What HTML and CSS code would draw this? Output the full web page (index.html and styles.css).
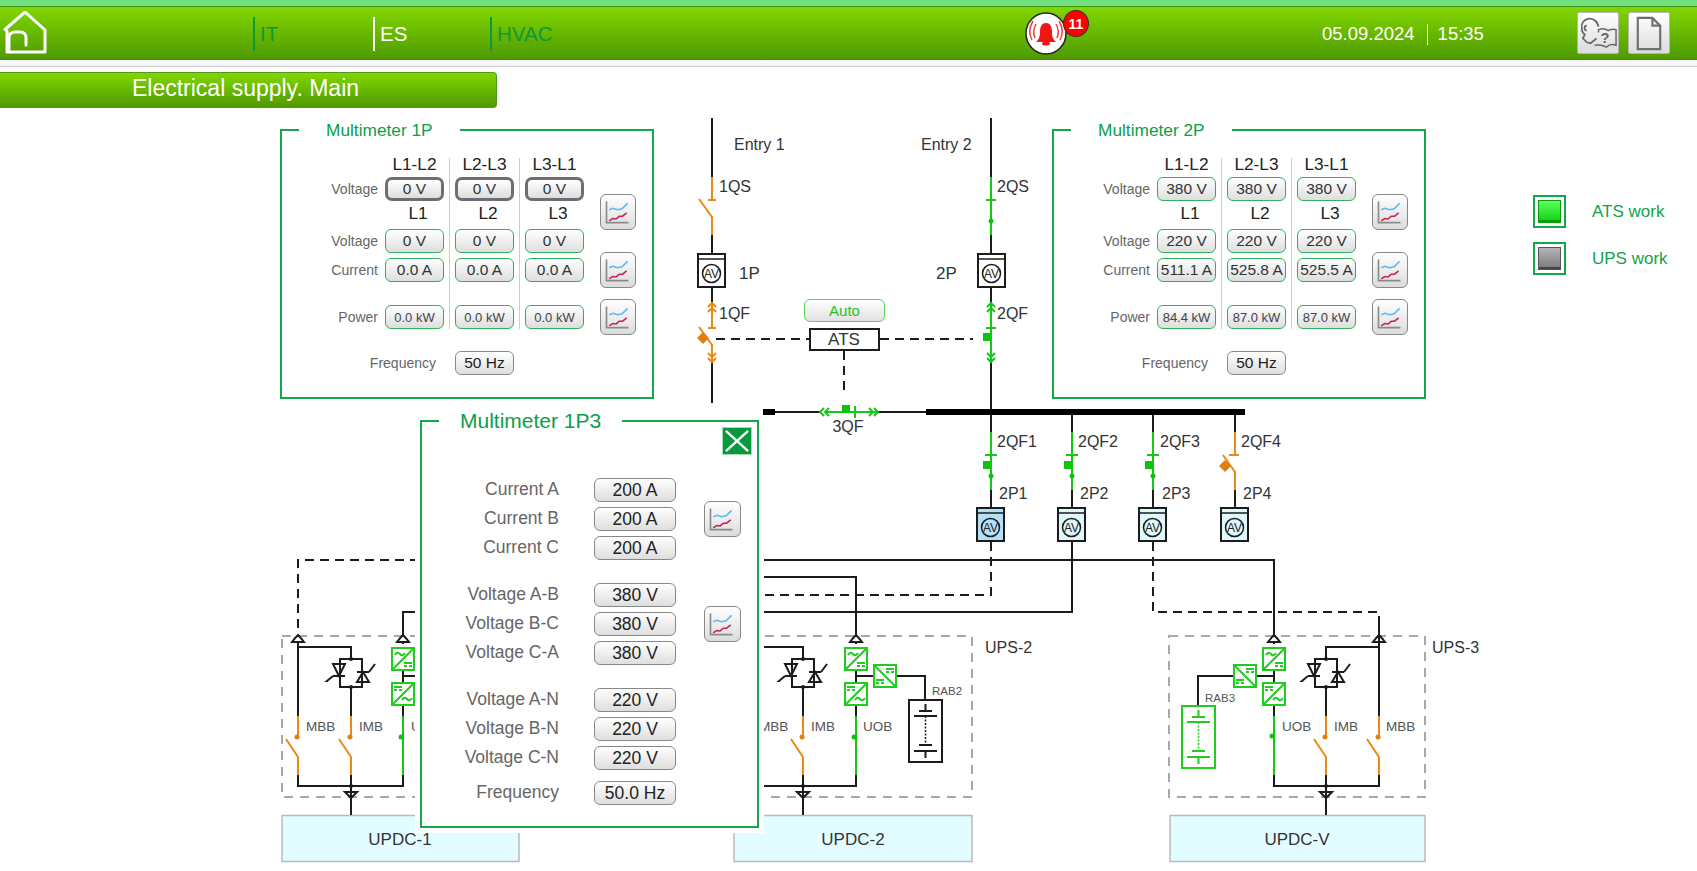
FILE: index.html
```html
<!DOCTYPE html>
<html lang="en">
<head>
<meta charset="utf-8">
<title>Electrical supply. Main</title>
<link rel="stylesheet" href="styles.css">
</head>
<body>
<div class="page">
  <div class="topstrip"></div>
  <header class="header">
    <svg class="home" viewBox="0 0 48 48"><path d="M3 18.500L23 1 43 19V41H5V20M7 38V27Q7 21 13 21H18Q24 21 24 27V34"/></svg>
    <nav class="nav">
      <a class="nav-item muted wide">IT</a>
      <a class="nav-item light">ES</a>
      <a class="nav-item muted wide">HVAC</a>
    </nav>
    <div class="alarm">
      <svg class="bell" viewBox="0 0 42 43">
        <ellipse cx="21" cy="21.500" rx="20" ry="20.500" fill="#fff" stroke="#222" stroke-width="1.500"/>
        <path d="M21 11C16.500 11 15 15 15 20C15 25 14 27 11 30H31C28 27 27 25 27 20C27 15 25.500 11 21 11Z" fill="#f01616"/>
        <ellipse cx="21" cy="31.500" rx="4" ry="2" fill="#f01616"/>
        <path d="M11 12Q7 19 10 26M8 9Q2 19 7 28M31 12Q35 19 32 26M34 9Q40 19 35 28" fill="none" stroke="#f04040" stroke-width="1.500"/>
      </svg>
      <span class="badge">11</span>
    </div>
    <div class="clock"><span>05.09.2024</span><i class="clock-sep"></i><span>15:35</span></div>
    <div class="tools">
      <button class="tool">
        <svg viewBox="0 0 41 41">
          <path d="M21 14C20 8 15 5 10 6C5 7 3 12 4 16C4 19 5 21 7 22L5 26L9 30L13 31L19 26M9 13C6 13 6 18 9 18" fill="none" stroke="#666" stroke-width="1.800"/>
          <path d="M21 20V17Q27 15 31 18Q35 16 39 17V33Q33 31 29 35Q24 32 17 33" fill="none" stroke="#666" stroke-width="1.500"/>
          <text x="23" y="31" class="tool-q">?</text>
        </svg>
      </button>
      <button class="tool">
        <svg viewBox="0 0 41 41"><path d="M9 5H24L32 13V37H9ZM24 5V13H32" fill="none" stroke="#6f6f6f" stroke-width="2.200"/></svg>
      </button>
    </div>
  </header>
  <div class="subbar"></div>
  <h1 class="titlebar">Electrical supply. Main</h1>

  <div class="stage">
    <svg class="scheme" viewBox="0 0 1697 871">
      <defs>
        <g id="chev-up"><path d="M-4 4L0 0 4 4M-4 9L0 5 4 9"/></g>
        <g id="chev-dn"><path d="M-4 -4L0 0 4 -4M-4 -9L0 -5 4 -9"/></g>
        <g id="chev-l"><path d="M4 -4L0 0 4 4M9 -4L5 0 9 4"/></g>
        <g id="chev-r"><path d="M-4 -4L0 0 -4 4M-9 -4L-5 0 -9 4"/></g>
        <g id="meter">
          <rect x="1" y="1" width="27" height="33" class="m-body"/>
          <path d="M1 6H28" class="m-line"/>
          <circle cx="14.500" cy="20.500" r="9" fill="none" class="m-line"/>
          <text x="14.500" y="21" class="m-text">AV</text>
        </g>
        <g id="conv-a">
          <rect x="1" y="1" width="22" height="22"/>
          <path d="M1 23L23 1M4 8Q6.500 4 9 7T14 6"/>
          <path d="M13 16H21M13 19H16M18 19H21" class="thin"/>
        </g>
        <g id="conv-b">
          <rect x="1" y="1" width="22" height="22"/>
          <path d="M1 23L23 1M11 18Q13.500 14 16 17T21 16"/>
          <path d="M3 5H11M3 8H6M8 8H11" class="thin"/>
        </g>
        <g id="conv-c">
          <rect x="1" y="1" width="22" height="22"/>
          <path d="M1 1L23 23"/>
          <path d="M13 5H21M13 8H16M18 8H21M3 16H11M3 19H6M8 19H11" class="thin"/>
        </g>
        <g id="thy">
          <rect x="1" y="1" width="22" height="28"/>
          <path d="M-6 6H6L0 18ZM-6 18H6M-6 18L-12 23H-11"/>
          <path d="M18 24H30L24 14ZM18 14H30M30 14L36 6"/>
          <circle cx="12" cy="1" r="2" class="dot"/>
          <circle cx="12" cy="29" r="2" class="dot"/>
        </g>
        <g id="up"><path d="M-6 7Q-3 3 0 0Q3 3 6 7ZM0 7V9"/></g>
        <g id="dn"><path d="M-6 0H6L0 6Z"/><circle cx="0" cy="-6" r="2" class="dot"/></g>
        <g id="sw"><path d="M0 0V21M-12 23L0 41V59"/><circle cx="-1" cy="21" r="2.500" class="orange-fill"/></g>
        <g id="batt">
          <rect x="1" y="1" width="33" height="62"/>
          <path d="M17.500 5V12M11 12H24M6 17H29M11 46H24M6 52H29M17.500 52V59"/>
          <path d="M17.500 17V46" class="dots"/>
        </g>
        <g id="chart-ico">
          <path d="M6 6V29H30" fill="none" stroke="#8a8a8a" stroke-width="1.800"/>
          <path d="M9 15L13 13.500 18 15 23 14 29 8" fill="none" stroke="#5bb8ef" stroke-width="1.700"/>
          <path d="M9 27L13 24.500 16.500 25 20 22 23.500 22 28 18.500" fill="none" stroke="#c8205a" stroke-width="1.700"/>
        </g>
      </defs>

      <!-- UPS frames and PDU blocks -->
      <rect class="ups-frame" x="282" y="636" width="237" height="161"/>
      <rect class="ups-frame" x="733" y="636" width="239" height="161"/>
      <rect class="ups-frame" x="1169" y="636" width="256" height="161"/>
      <rect class="updc" x="282" y="815.500" width="237" height="46"/>
      <rect class="updc" x="734" y="815.500" width="238" height="46"/>
      <rect class="updc" x="1170" y="815.500" width="255" height="46"/>
      <text class="t17 c" x="400" y="839">UPDC-1</text>
      <text class="t17 c" x="853" y="839">UPDC-2</text>
      <text class="t17 c" x="1297" y="839">UPDC-V</text>
      <text class="t16" x="985" y="647">UPS-2</text>
      <text class="t16" x="1432" y="647">UPS-3</text>

      <!-- Entry 1 -->
      <path class="bk" d="M712 118V177M712 235V253M712 287V303M712 362V403"/>
      <path class="or" d="M712 177V200M708 200H716M699 199L712 217V235M712 304V328M708 328H716M699 327L712 345V362"/>
      <use href="#chev-up" x="712" y="303" class="or"/>
      <use href="#chev-dn" x="712" y="362" class="or"/>
      <path d="M703 332L709 338 703 344 697 338Z" class="or-fill"/>
      <use href="#meter" x="697" y="253" class="m-white"/>
      <!-- Entry 2 -->
      <path class="bk" d="M991 118V177M991 235V253M991 287V303M991 362V506"/>
      <path class="gr" d="M991 177V235M986 200H996M991 304V362M986 328H996"/>
      <circle cx="991" cy="221" r="2.500" class="gr-fill"/>
      <use href="#chev-up" x="991" y="303" class="gr"/>
      <use href="#chev-dn" x="991" y="362" class="gr"/>
      <rect x="983" y="333" width="8" height="8" class="gr-fill"/>
      <use href="#meter" x="977" y="253" class="m-white"/>
      <text class="t16" x="734" y="144">Entry 1</text>
      <text class="t16" x="921" y="144">Entry 2</text>
      <text class="t16" x="719" y="186">1QS</text>
      <text class="t16" x="997" y="186">2QS</text>
      <text class="t17" x="739" y="273">1P</text>
      <text class="t17" x="936" y="273">2P</text>
      <text class="t16" x="719" y="313">1QF</text>
      <text class="t16" x="997" y="313">2QF</text>

      <!-- ATS links -->
      <path class="bk ds" d="M716 339H809M880 339H973M844 351V395"/>
      <rect class="ats" x="810" y="329" width="69" height="21"/>
      <text class="t17 c" x="844" y="339">ATS</text>

      <!-- Bus -->
      <path class="bk" d="M775 412H820M878 412H926"/>
      <path class="bus" d="M763 412H775M926 412H1245"/>
      <path class="gr" d="M826 412H877M855 406V418"/>
      <use href="#chev-l" x="820" y="412" class="gr"/>
      <use href="#chev-r" x="878" y="412" class="gr"/>
      <rect x="842" y="405" width="8" height="8" class="gr-fill"/>
      <text class="t16 c" x="848" y="426">3QF</text>

      <!-- Outgoing feeders -->
      <path class="bk" d="M991 415V432M991 490V507M1072 415V432M1072 490V507M1153 415V432M1153 490V507M1235 415V432M1235 490V507"/>
      <path class="gr" d="M991 432V490M985 455H997M1072 432V490M1066 455H1078M1153 432V490M1147 455H1159"/>
      <rect x="983" y="461" width="8" height="8" class="gr-fill"/>
      <rect x="1064" y="461" width="8" height="8" class="gr-fill"/>
      <rect x="1145" y="461" width="8" height="8" class="gr-fill"/>
      <circle cx="991" cy="476" r="2.500" class="gr-fill"/>
      <circle cx="1072" cy="476" r="2.500" class="gr-fill"/>
      <circle cx="1153" cy="476" r="2.500" class="gr-fill"/>
      <path class="or" d="M1235 432V455M1229 455H1239M1223 455L1235 472V490"/>
      <path d="M1225 460L1231 466 1225 472 1219 466Z" class="or-fill"/>
      <use href="#meter" x="976" y="507" class="m-blue"/>
      <use href="#meter" x="1057" y="507" class="m-cyan"/>
      <use href="#meter" x="1138" y="507" class="m-cyan"/>
      <use href="#meter" x="1220" y="507" class="m-cyan"/>
      <text class="t16" x="997" y="441">2QF1</text>
      <text class="t16" x="1078" y="441">2QF2</text>
      <text class="t16" x="1160" y="441">2QF3</text>
      <text class="t16" x="1241" y="441">2QF4</text>
      <text class="t16" x="999" y="493">2P1</text>
      <text class="t16" x="1080" y="493">2P2</text>
      <text class="t16" x="1162" y="493">2P3</text>
      <text class="t16" x="1243" y="493">2P4</text>

      <!-- Feeders to UPS -->
      <path class="bk" d="M750 560H1274V636M750 577H856V636M750 612H1072V542"/>
      <path class="bk ds" d="M991 542V595H750M1153 542V612H1379V622M298 628V560H420"/>
      <path class="bk" d="M420 612H403V636"/>

      <!-- UPS-1 -->
      <path class="bk" d="M298 642V716M298 775V786H403V775M298 647H351V658M351 688V716M351 775V815M403 706V716M403 671V682M403 676H420"/>
      <use href="#up" x="298" y="635" class="bk"/>
      <use href="#up" x="403" y="635" class="bk"/>
      <use href="#dn" x="351" y="792" class="bk"/>
      <use href="#thy" x="339" y="658" class="bk"/>
      <use href="#conv-a" x="391" y="647" class="gr-sym"/>
      <use href="#conv-b" x="391" y="682" class="gr-sym"/>
      <use href="#sw" x="298" y="716" class="or"/>
      <use href="#sw" x="351" y="716" class="or"/>
      <path class="gr" d="M403 716V775"/><circle cx="401" cy="737" r="2.500" class="gr-fill"/>
      <text class="t13" x="306" y="726">MBB</text>
      <text class="t13" x="359" y="726">IMB</text>
      <text class="t13" x="411" y="726">UOB</text>

      <!-- UPS-2 -->
      <path class="bk" d="M750 642V716M750 775V786H856V775M750 647H803V658M803 688V716M803 775V815M856 706V716M856 671V682M856 676H873M897 676H925V699"/>
      <use href="#up" x="856" y="635" class="bk"/>
      <use href="#dn" x="803" y="792" class="bk"/>
      <use href="#thy" x="791" y="658" class="bk"/>
      <use href="#conv-a" x="844" y="647" class="gr-sym"/>
      <use href="#conv-b" x="844" y="682" class="gr-sym"/>
      <use href="#conv-c" x="873" y="664" class="gr-sym"/>
      <use href="#sw" x="803" y="716" class="or"/>
      <path class="gr" d="M856 716V775"/><circle cx="854" cy="737" r="2.500" class="gr-fill"/>
      <use href="#batt" x="908" y="699" class="batt-bk"/>
      <text class="t13" x="759" y="726">MBB</text>
      <text class="t13" x="811" y="726">IMB</text>
      <text class="t13" x="863" y="726">UOB</text>
      <text class="t12" x="932" y="691">RAB2</text>

      <!-- UPS-3 -->
      <path class="bk" d="M1379 622V716M1326 716V688M1326 658V647H1379M1274 775V786H1379V775M1326 775V815M1274 706V716M1274 671V682M1274 676H1257M1233 676H1198V705"/>
      <use href="#up" x="1274" y="635" class="bk"/>
      <use href="#up" x="1379" y="635" class="bk"/>
      <use href="#dn" x="1326" y="792" class="bk"/>
      <use href="#thy" x="1314" y="658" class="bk"/>
      <use href="#conv-a" x="1262" y="647" class="gr-sym"/>
      <use href="#conv-b" x="1262" y="682" class="gr-sym"/>
      <use href="#conv-c" x="1233" y="664" class="gr-sym"/>
      <use href="#sw" x="1326" y="716" class="or"/>
      <use href="#sw" x="1379" y="716" class="or"/>
      <path class="gr" d="M1274 716V775"/><circle cx="1272" cy="736" r="2.500" class="gr-fill"/>
      <use href="#batt" x="1181" y="705" class="batt-gr"/>
      <text class="t13" x="1282" y="726">UOB</text>
      <text class="t13" x="1334" y="726">IMB</text>
      <text class="t13" x="1386" y="726">MBB</text>
      <text class="t12" x="1205" y="698">RAB3</text>
    </svg>

    <button class="auto">Auto</button>

    <section class="panel panel-1p">
      <h2 class="panel-title">Multimeter 1P</h2>
      <div class="meter-grid">
        <i class="sep sep-a"></i><i class="sep sep-b"></i>
        <b class="head col-a">L1-L2</b><b class="head col-b">L2-L3</b><b class="head col-c">L3-L1</b>
        <span class="lab r2">Voltage</span><span class="val thick col-a r2">0 V</span><span class="val thick col-b r2">0 V</span><span class="val thick col-c r2">0 V</span>
        <b class="head shift col-a r3">L1</b><b class="head shift col-b r3">L2</b><b class="head shift col-c r3">L3</b>
        <button class="chart chart-top r3"><svg viewBox="0 0 36 36"><use href="#chart-ico"/></svg></button>
        <span class="lab r4">Voltage</span><span class="val col-a r4">0 V</span><span class="val col-b r4">0 V</span><span class="val col-c r4">0 V</span>
        <span class="lab r6">Current</span><span class="val col-a r6">0.0 A</span><span class="val col-b r6">0.0 A</span><span class="val col-c r6">0.0 A</span>
        <button class="chart r6"><svg viewBox="0 0 36 36"><use href="#chart-ico"/></svg></button>
        <span class="lab r8">Power</span><span class="val small col-a r8">0.0 kW</span><span class="val small col-b r8">0.0 kW</span><span class="val small col-c r8">0.0 kW</span>
        <button class="chart r8"><svg viewBox="0 0 36 36"><use href="#chart-ico"/></svg></button>
        <span class="lab freq r10">Frequency</span><span class="val plain col-b r10">50 Hz</span>
      </div>
    </section>

    <section class="panel panel-2p">
      <h2 class="panel-title">Multimeter 2P</h2>
      <div class="meter-grid">
        <i class="sep sep-a"></i><i class="sep sep-b"></i>
        <b class="head col-a">L1-L2</b><b class="head col-b">L2-L3</b><b class="head col-c">L3-L1</b>
        <span class="lab r2">Voltage</span><span class="val col-a r2">380 V</span><span class="val col-b r2">380 V</span><span class="val col-c r2">380 V</span>
        <b class="head shift col-a r3">L1</b><b class="head shift col-b r3">L2</b><b class="head shift col-c r3">L3</b>
        <button class="chart chart-top r3"><svg viewBox="0 0 36 36"><use href="#chart-ico"/></svg></button>
        <span class="lab r4">Voltage</span><span class="val col-a r4">220 V</span><span class="val col-b r4">220 V</span><span class="val col-c r4">220 V</span>
        <span class="lab r6">Current</span><span class="val col-a r6">511.1 A</span><span class="val col-b r6">525.8 A</span><span class="val col-c r6">525.5 A</span>
        <button class="chart r6"><svg viewBox="0 0 36 36"><use href="#chart-ico"/></svg></button>
        <span class="lab r8">Power</span><span class="val small col-a r8">84.4 kW</span><span class="val small col-b r8">87.0 kW</span><span class="val small col-c r8">87.0 kW</span>
        <button class="chart r8"><svg viewBox="0 0 36 36"><use href="#chart-ico"/></svg></button>
        <span class="lab freq r10">Frequency</span><span class="val plain col-b r10">50 Hz</span>
      </div>
    </section>

    <aside class="legend">
      <div class="legend-row"><span class="led-frame"><span class="led on"></span></span><span>ATS work</span></div>
      <div class="legend-row"><span class="led-frame"><span class="led off"></span></span><span>UPS work</span></div>
    </aside>

    <section class="popup">
      <h2 class="popup-title">Multimeter 1P3</h2>
      <button class="close"><svg viewBox="0 0 30 28"><path d="M3 3L27 25M27 3L3 25"/></svg></button>
      <div class="popup-body">
        <div class="pgroup">
          <span class="plab">Current A</span><span class="pval">200 A</span>
          <span class="plab">Current B</span><span class="pval">200 A</span>
          <span class="plab">Current C</span><span class="pval">200 A</span>
          <button class="chart pchart"><svg viewBox="0 0 36 36"><use href="#chart-ico"/></svg></button>
        </div>
        <div class="pgroup">
          <span class="plab">Voltage A-B</span><span class="pval">380 V</span>
          <span class="plab">Voltage B-C</span><span class="pval">380 V</span>
          <span class="plab">Voltage C-A</span><span class="pval">380 V</span>
          <button class="chart pchart"><svg viewBox="0 0 36 36"><use href="#chart-ico"/></svg></button>
        </div>
        <div class="pgroup">
          <span class="plab">Voltage A-N</span><span class="pval">220 V</span>
          <span class="plab">Voltage B-N</span><span class="pval">220 V</span>
          <span class="plab">Voltage C-N</span><span class="pval">220 V</span>
        </div>
        <div class="pgroup pgroup-last">
          <span class="plab">Frequency</span><span class="pval">50.0 Hz</span>
        </div>
      </div>
    </section>
  </div>
</div>
</body>
</html>
```
FILE: styles.css
```css
* { box-sizing: border-box; }
html, body { margin: 0; padding: 0; background: #fff; }
body { font-family: "Liberation Sans", Arial, sans-serif; color: #333; overflow: hidden; }
.page { position: relative; width: 1697px; height: 871px; overflow: hidden; }

.topstrip { height: 6px; background: #72e27f; }
.header {
  height: 54px; display: flex; align-items: center;
  background: linear-gradient(#82d600, #4f9a00);
  border-top: 1px solid #3f8f10; border-bottom: 1px solid #3f8f10;
  position: relative; z-index: 2;
}
.home { width: 48px; height: 48px; margin: 4px 0 0 2px; flex: none; }
.home path { fill: none; stroke: #fff; stroke-width: 3; stroke-linejoin: round; stroke-linecap: round; }
.nav { display: flex; margin: 2px 0 0 203px; }
.nav-item { display: flex; align-items: center; width: 117px; height: 34px; padding-left: 5px; font-size: 20.500px; border-left: 2px solid; }
.nav-item.wide { width: 120px; }
.nav-item.muted { color: #0a9a3c; border-color: #0a9a3c; }
.nav-item.light { color: #fff; border-color: #fff; }
.alarm { position: relative; width: 42px; height: 43px; margin: 1px 0 0 415px; flex: none; }
.bell { display: block; width: 42px; height: 43px; }
.badge {
  position: absolute; left: 38px; top: -2px; width: 26px; height: 27px; border-radius: 50%;
  background: #f00; border: 1px solid #333; color: #fff; font-size: 14px; font-weight: bold;
  display: flex; align-items: center; justify-content: center;
}
.clock { display: flex; align-items: center; margin: 2px 0 0 255px; color: #fff; font-size: 18.500px; }
.clock-sep { display: block; width: 1px; height: 21px; background: #fff; margin: 0 10px 0 12px; }
.tools { display: flex; gap: 9px; margin-left: auto; margin-right: 27px; }
.tool { width: 42px; height: 42px; padding: 0; border: 1px solid #b5b5b5; border-radius: 2px; background: linear-gradient(#fff, #dcdcdc); }
.tool svg { display: block; width: 40px; height: 40px; }
.tool-q { font: bold 15px "Liberation Sans", sans-serif; fill: #666; }

.subbar { height: 7px; background: #f5f7fa; border-bottom: 1px solid #ccc; }
.titlebar {
  margin: 5px 0 0; width: 497px; height: 36px; padding: 0 5px 3px 0; font-size: 23px; font-weight: normal; color: #fff;
  display: flex; align-items: center; justify-content: center;
  background: linear-gradient(#82d600, #4f9a00);
  border: 1px solid #4f9a1a; border-left: 0; border-radius: 0 4px 4px 0;
}

.stage { position: absolute; inset: 0; z-index: 1; }
.scheme { position: absolute; left: 0; top: 0; width: 1697px; height: 871px; }
.scheme text { font-family: "Liberation Sans", Arial, sans-serif; fill: #333; dominant-baseline: central; }
.scheme .c { text-anchor: middle; }
.t17 { font-size: 17px; }
.t16 { font-size: 16px; }
.t13 { font-size: 13.500px; }
.t12 { font-size: 11.500px; }
.scheme .t13, .scheme .t12 { fill: #555; }

.bk { stroke: #1c1c1c; stroke-width: 2; fill: none; }
.ds { stroke-dasharray: 9 6; }
.or { stroke: #e88a14; stroke-width: 2; fill: none; }
.gr { stroke: #14c814; stroke-width: 2; fill: none; }
.or-fill, .orange-fill { fill: #e07f10; stroke: none; }
.gr-fill { fill: #0cc40c; stroke: none; }
.dot { fill: #1c1c1c; stroke: none; }
.bus { stroke: #000; stroke-width: 6; fill: none; }
.ats { fill: #fff; stroke: #1c1c1c; stroke-width: 2; }
.ups-frame { fill: none; stroke: #a8a8a8; stroke-width: 2; stroke-dasharray: 9 7; }
.updc { fill: #e2fdff; stroke: #bababa; stroke-width: 1.500; }
.gr-sym { stroke: #1fcc1f; stroke-width: 2; fill: none; }
.gr-sym .thin { stroke-width: 1.100; }
.batt-bk { stroke: #1c1c1c; stroke-width: 2; fill: none; }
.batt-gr { stroke: #1fcc1f; stroke-width: 2; fill: none; }
.dots { stroke-width: 1.500; stroke-dasharray: 2 1.500; }
.m-body { stroke: #1c1c1c; stroke-width: 2; }
.m-line { stroke: #1c1c1c; stroke-width: 1.500; }
.scheme .m-text { font-size: 12px; text-anchor: middle; fill: #222; stroke: none; }
.m-white { fill: #fff; }
.m-blue { fill: #b3e0f5; }
.m-cyan { fill: #dff8fb; }

.auto {
  position: absolute; left: 804px; top: 299px; width: 81px; height: 23px; padding: 0;
  border: 1.500px solid #55d455; border-radius: 6px; background: linear-gradient(#fff, #e2e2e2);
  font: 15px "Liberation Sans", Arial, sans-serif; color: #22c522;
}

.panel { position: absolute; top: 129px; width: 374px; height: 270px; border: 2px solid #12a84a; background: #fff; }
.panel-1p { left: 280px; }
.panel-2p { left: 1052px; }
.panel-title {
  position: absolute; left: 17px; top: -11px; height: 20px; margin: 0; padding: 0 27px;
  background: #fff; color: #0aa04a; font-size: 17.300px; font-weight: normal; line-height: 20px;
}
.meter-grid {
  display: grid; padding-top: 21px;
  grid-template-columns: 103px 70px 70px 70px 41px;
  grid-template-rows: 25px 24px 28px 24px 5px 24px 23px 24px 22px 24px;
}
.sep { grid-row: 1 / 9; width: 1px; margin: 6px 0 0 64px; background: #ccc; }
.sep-a { grid-column: 2; }
.sep-b { grid-column: 3; }
.head { grid-row: 1; width: 59px; text-align: center; font-size: 17.300px; font-weight: normal; color: #222; line-height: 24px; }
.head.shift { padding-left: 7px; }
.col-a { grid-column: 2; }
.col-b { grid-column: 3; }
.col-c { grid-column: 4; }
.r2 { grid-row: 2; }
.r3 { grid-row: 3; }
.r4 { grid-row: 4; }
.r6 { grid-row: 6; }
.r8 { grid-row: 8; }
.r10 { grid-row: 10; }
.lab { grid-column: 1; text-align: right; padding-right: 7px; font-size: 14px; color: #666; align-self: center; }
.lab.freq { grid-column: 1 / 3; padding-right: 19px; }
.val {
  width: 59px; height: 24px; display: flex; align-items: center; justify-content: center;
  border: 1.500px solid #2fb05a; border-radius: 6px; background: linear-gradient(#fff, #dedede);
  font-size: 15.500px; color: #333; white-space: nowrap; overflow: hidden;
}
.val.small { font-size: 13px; color: #444; }
.val.thick { border: 3px solid #6e6e72; border-radius: 7px; }
.val.plain { border-color: #888; color: #222; }
.chart {
  grid-column: 5; place-self: center end; width: 36px; height: 36px; padding: 0;
  border: 1.500px solid #888; border-radius: 6px; background: linear-gradient(#fff, #dcdcdc);
}
.chart svg { display: block; width: 33px; height: 33px; }
.chart-top { margin-top: -6px; }

.legend { position: absolute; left: 1533px; top: 195px; display: flex; flex-direction: column; gap: 14px; color: #12a34a; font-size: 17px; }
.legend-row { display: flex; align-items: center; gap: 26px; height: 33px; }
.led-frame { width: 33px; height: 33px; padding: 3px; border: 2px solid #12a84a; background: #fff; }
.led { display: block; width: 100%; height: 100%; border: 1px solid; }
.led.on { background: linear-gradient(#5cff5c, #10d010); border-color: #0a9a0a; box-shadow: inset 0 -2px 0 #00a000; }
.led.off { background: linear-gradient(#b5b5b5, #7a7a7a); border-color: #555; box-shadow: inset 0 -2px 0 #444; }

.popup {
  position: absolute; left: 420px; top: 420px; width: 339px; height: 408px;
  background: #fff; border: 2px solid #12a84a; box-shadow: 0 0 0 5px #fff;
}
.popup-title {
  position: absolute; left: 17px; top: -13px; height: 24px; margin: 0; padding: 0 21px;
  background: #fff; color: #0aa04a; font-size: 21px; font-weight: normal; line-height: 24px;
}
.close { position: absolute; left: 300px; top: 5px; width: 30px; height: 28px; padding: 0; border: 1px solid #a8dcb8; background: #059a3c; }
.close svg { display: block; width: 28px; height: 26px; }
.close path { fill: none; stroke: #fff; stroke-width: 2.500; }
.popup-body { display: flex; flex-direction: column; gap: 23px; padding-top: 56px; }
.pgroup { display: grid; grid-template-columns: 137px 35px 82px 28px 37px; row-gap: 5px; grid-auto-rows: 24px; }
.pgroup-last { margin-top: -12px; }
.plab { grid-column: 1; font-size: 17.500px; color: #666; text-align: right; align-self: center; margin-top: -1px; white-space: nowrap; }
.pval {
  grid-column: 3; height: 24px; display: flex; align-items: center; justify-content: center;
  border: 1.500px solid #888; border-radius: 6px; background: linear-gradient(#fff, #dedede);
  font-size: 17.500px; color: #222;
}
.pchart { grid-column: 5; grid-row: 1 / 4; place-self: center start; width: 37px; }
```
